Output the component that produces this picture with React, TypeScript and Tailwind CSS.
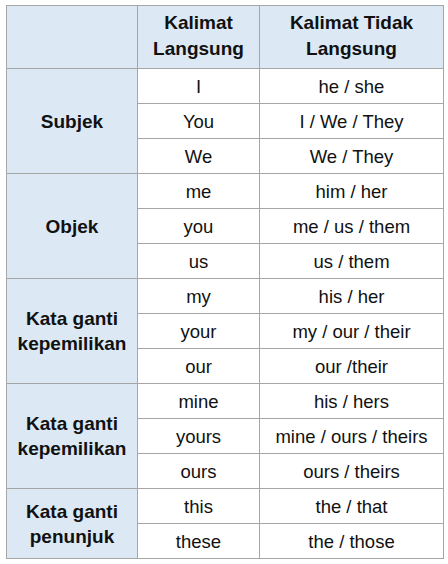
const groups = [
  { label: ['Subjek'], rows: [['I', 'he / she'], ['You', 'I / We / They'], ['We', 'We / They']] },
  { label: ['Objek'], rows: [['me', 'him / her'], ['you', 'me / us / them'], ['us', 'us / them']] },
  { label: ['Kata ganti', 'kepemilikan'], rows: [['my', 'his / her'], ['your', 'my / our / their'], ['our', 'our /their']] },
  { label: ['Kata ganti', 'kepemilikan'], rows: [['mine', 'his / hers'], ['yours', 'mine / ours / theirs'], ['ours', 'ours / theirs']] },
  { label: ['Kata ganti', 'penunjuk'], rows: [['this', 'the / that'], ['these', 'the / those']] },
];

export default function App() {
  return (
    <div
      className="w-[448px] h-[564px] bg-white pl-[6px] pt-[5px] text-[#111] text-[18.5px]"
      style={{ fontFamily: '"Liberation Sans", Arial, sans-serif' }}
    >
      <table className="border-collapse w-[437px] table-fixed">
        <colgroup>
          <col className="w-[131px]" />
          <col className="w-[122px]" />
          <col className="w-[184px]" />
        </colgroup>
        <thead>
          <tr className="h-[63px] bg-[#dce9f5] font-bold text-[19px] leading-[26px]">
            <th className="border border-[#a6a6a6]"></th>
            <th className="border border-[#a6a6a6] text-center pb-[2px]">
              Kalimat<br />Langsung
            </th>
            <th className="border border-[#a6a6a6] text-center pb-[2px]">
              Kalimat Tidak<br />Langsung
            </th>
          </tr>
        </thead>
        <tbody>
          {groups.map((g, gi) =>
            g.rows.map((r, ri) => (
              <tr key={`${gi}-${ri}`} className="h-[35px]">
                {ri === 0 && (
                  <td
                    rowSpan={g.rows.length}
                    className="border border-[#a6a6a6] bg-[#dce9f5] font-bold text-[19px] text-center leading-[25px]"
                  >
                    {g.label.map((l, i) => (
                      <div key={i}>{l}</div>
                    ))}
                  </td>
                )}
                <td className="border border-[#a6a6a6] text-center pt-[1px]">{r[0]}</td>
                <td className="border border-[#a6a6a6] text-center pt-[1px]">{r[1]}</td>
              </tr>
            ))
          )}
        </tbody>
      </table>
    </div>
  );
}
